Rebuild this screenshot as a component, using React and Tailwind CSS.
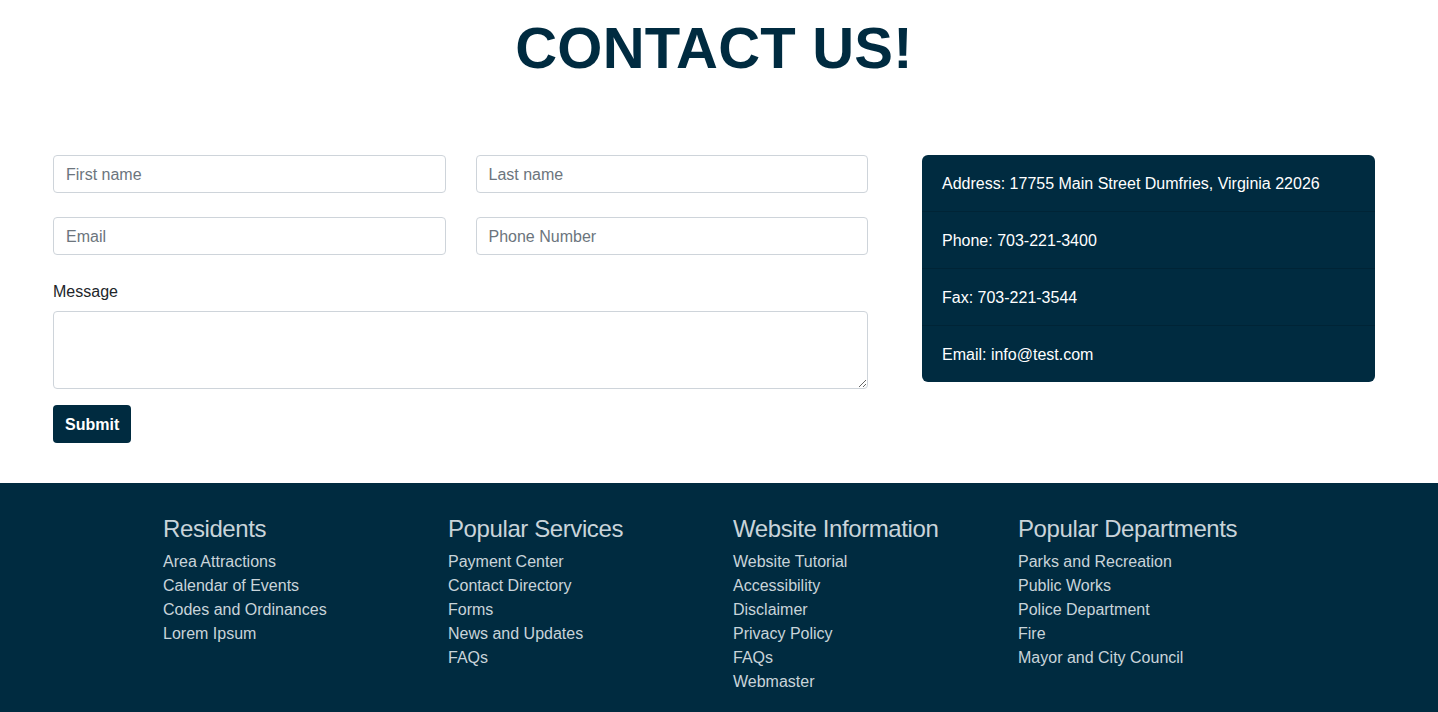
const footerCols = [
  {
    title: "Residents",
    links: ["Area Attractions", "Calendar of Events", "Codes and Ordinances", "Lorem Ipsum"],
  },
  {
    title: "Popular Services",
    links: ["Payment Center", "Contact Directory", "Forms", "News and Updates", "FAQs"],
  },
  {
    title: "Website Information",
    links: ["Website Tutorial", "Accessibility", "Disclaimer", "Privacy Policy", "FAQs", "Webmaster"],
  },
  {
    title: "Popular Departments",
    links: ["Parks and Recreation", "Public Works", "Police Department", "Fire", "Mayor and City Council"],
  },
];

const contactInfo = [
  "Address: 17755 Main Street Dumfries, Virginia 22026",
  "Phone: 703-221-3400",
  "Fax: 703-221-3544",
  "Email: info@test.com",
];

const inputCls =
  "h-[38px] w-full rounded-[4px] border border-[#ced4da] bg-white px-[12px] pt-px text-[16px] text-[#495057] placeholder:text-[#6c757d] outline-none";

export default function App() {
  return (
    <div className="min-h-screen bg-white font-['Liberation_Sans',Arial,sans-serif] text-[#212529]">
      <section className="pl-[53px] pr-[63px] pb-[40px]">
        <h1 className="pt-[19px] h-[76px] text-center text-[58px] font-bold leading-none tracking-[0.2px] text-[#002b40]">
          CONTACT US!
        </h1>

        <div className="mt-[79px] flex gap-[54px]">
          <form className="w-[815px] shrink-0" onSubmit={(e) => e.preventDefault()}>
            <div className="grid grid-cols-2 gap-x-[30px] gap-y-6">
              <input className={inputCls} placeholder="First name" />
              <input className={inputCls} placeholder="Last name" />
              <input className={inputCls} placeholder="Email" />
              <input className={inputCls} placeholder="Phone Number" />
            </div>
            <label className="mt-6 mb-2 block pt-px h-6 text-[16px] leading-6 text-[#212529]">Message</label>
            <textarea className="block h-[78px] w-full rounded-[4px] border border-[#ced4da] px-[12px] py-[6px] text-[16px] outline-none" />
            <button
              type="submit"
              className="mt-4 h-[38px] rounded-[4px] bg-[#002b40] px-[12px] pt-px text-[16px] font-bold text-white"
            >
              Submit
            </button>
          </form>

          <div className="flex-1 self-start overflow-hidden rounded-[6px] bg-[#002b40] text-[16px] text-white">
            {contactInfo.map((line, i) => (
              <div
                key={line}
                className={`px-5 pt-[17px] pb-[15px] leading-6 ${i < contactInfo.length - 1 ? "border-b border-black/15" : ""}`}
              >
                {line}
              </div>
            ))}
          </div>
        </div>
      </section>

      <footer className="h-[229px] bg-[#002b40] pt-[32px]">
        <div className="mx-auto grid w-[1140px] -translate-x-px grid-cols-4">
          {footerCols.map((col) => (
            <div key={col.title} className="px-[15px]">
              <h4 className="mb-[6px] text-[24px] leading-[1.2] font-medium tracking-[-0.4px] text-[#c9d4da]">
                {col.title}
              </h4>
              <ul>
                {col.links.map((link) => (
                  <li key={link} className="text-[16px] leading-6 text-[#c9d4da]">
                    <a href="#">{link}</a>
                  </li>
                ))}
              </ul>
            </div>
          ))}
        </div>
      </footer>
    </div>
  );
}
